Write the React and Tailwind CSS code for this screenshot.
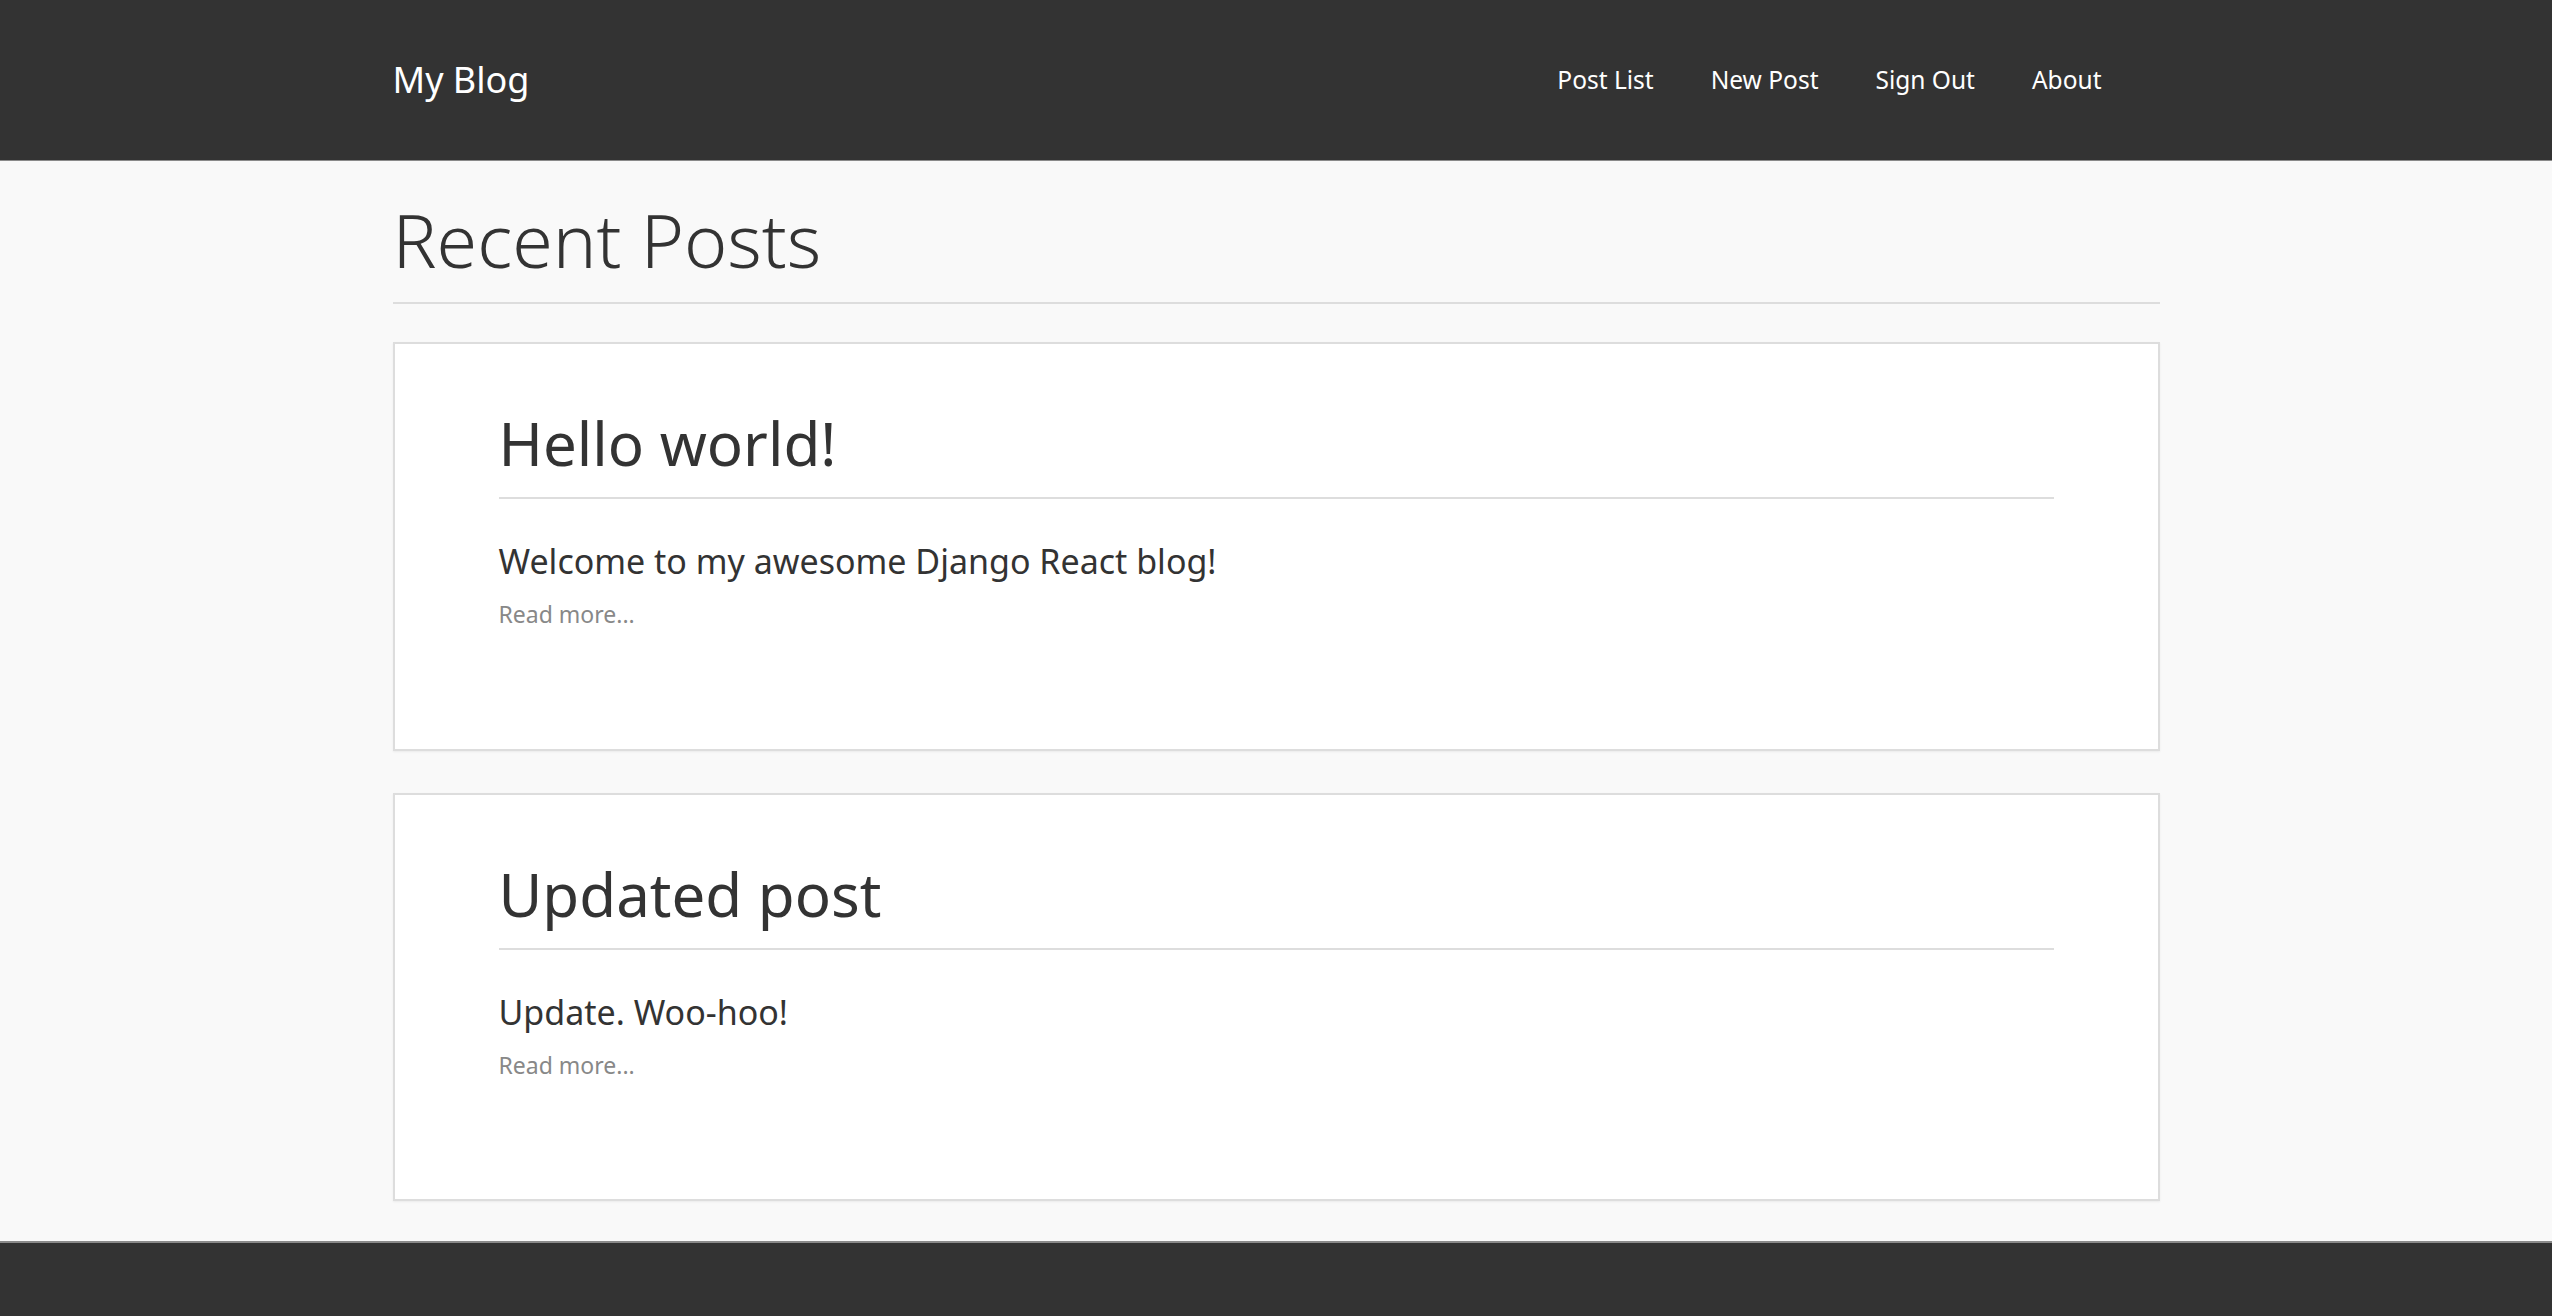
import React from 'react';

const posts = [
  { id: 1, title: 'Hello world!', body: 'Welcome to my awesome Django React blog!' },
  { id: 2, title: 'Updated post', body: 'Update. Woo-hoo!' },
];

const links = ['Post List', 'New Post', 'Sign Out', 'About'];

function PostCard({ post }) {
  return (
    <div className="bg-white border-2 border-[#dddddd] shadow-[0_1px_2px_rgba(0,0,0,0.06)] pt-[63px] px-[104px] pb-[117px]">
      <h2 className="text-[60px] leading-[1.2] text-[#333] pb-[18px] border-b-2 border-[#dddddd]">{post.title}</h2>
      <p className="mt-[37px] text-[34px] leading-[1.5] text-[#333]">{post.body}</p>
      <a href="#" className="block mt-[10px] text-[23px] leading-[1.5] text-[#888]">Read more...</a>
    </div>
  );
}

function App() {
  return (
    <div className="min-h-screen bg-[#f9f9f9] font-['Noto_Sans',sans-serif]">
      {/* Header */}
      <header className="h-[161px] bg-[#333] border-b border-[#8a8a8a]">
        <div className="w-[1767px] mx-auto h-full flex items-center justify-between">
          <a href="#" className="text-[36px] text-white">My Blog</a>
          <nav className="flex gap-[57px] pr-[58px]">
            {links.map(l => (
              <a key={l} href="#" className="text-[24.5px] text-white">{l}</a>
            ))}
          </nav>
        </div>
      </header>

      {/* Posts */}
      <main className="w-[1767px] mx-auto pb-[40px]">
        <h1 className="mt-[35px] text-[73.5px] leading-[1.2] font-light text-[#333] pb-[18px] border-b-2 border-[#dddddd]">Recent Posts</h1>
        <div className="mt-[38px] flex flex-col gap-[42px]">
          {posts.map(p => <PostCard key={p.id} post={p} />)}
        </div>
      </main>

      {/* Footer */}
      <footer className="h-[120px] bg-[#333] border-t-2 border-[#8a8a8a]"></footer>
    </div>
  );
}

export default App;
